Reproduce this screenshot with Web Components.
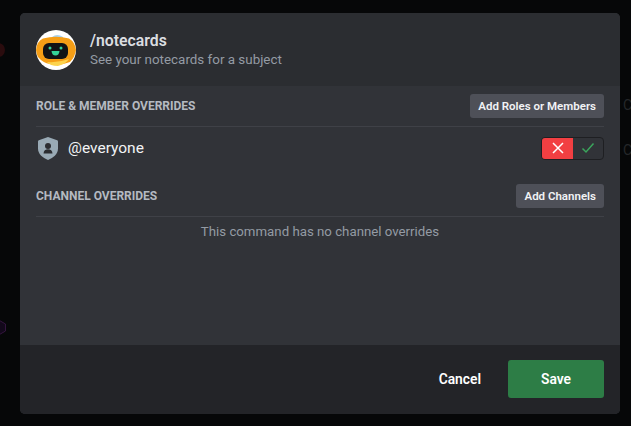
<!DOCTYPE html>
<html>
<head>
<meta charset="utf-8">
<style>
  html, body { margin: 0; height: 100%; }
  body {
    width: 631px;
    height: 426px;
    overflow: hidden;
    background: #060708;
    font-family: Roboto, "Noto Sans", sans-serif;
  }
</style>
</head>
<body>
<perm-backdrop>
  <perm-modal>
    <cmd-header slot="header" name="/notecards" desc="See your notecards for a subject"></cmd-header>
    <section-head title="Role &amp; Member Overrides" action="Add Roles or Members"></section-head>
    <everyone-row></everyone-row>
    <section-head title="Channel Overrides" action="Add Channels"></section-head>
    <p style="margin:6px 0 0;text-align:center;font-size:13.25px;line-height:18px;color:#949ba4">This command has no channel overrides</p>
    <modal-footer slot="footer"></modal-footer>
  </perm-modal>
</perm-backdrop>

<script>
// Dimmed page behind the dialog
class PermBackdrop extends HTMLElement {
  constructor() {
    super();
    this.attachShadow({ mode: "open" });
    this.shadowRoot.innerHTML = `
      <style>
        :host { display: flex; position: relative; width: 631px; height: 426px; box-sizing: border-box; padding: 13px 11px 12px 20px; }
        .dot { position: absolute; left: -8px; top: 43px; width: 13px; height: 14px; border-radius: 50%; background: #2a0c0e; }
        .hex { position: absolute; left: -7px; top: 320px; }
        .c { position: absolute; left: 623px; font: 14px Roboto, sans-serif; color: #25272a; }
      </style>
      <div class="dot"></div>
      <svg class="hex" width="13" height="15" viewBox="0 0 13 15"><path d="M6.500 .5 12.500 4V11L6.500 14.500 .5 11V4Z" fill="#12081a" stroke="#34153f"/></svg>
      <div class="c" style="top:97px">C</div>
      <div class="c" style="top:142px">C</div>
      <slot></slot>`;
  }
}

class PermModal extends HTMLElement {
  constructor() {
    super();
    this.attachShadow({ mode: "open" });
    this.shadowRoot.innerHTML = `
      <style>
        :host { display: flex; flex-direction: column; width: 600px; height: 401px; border-radius: 5px; overflow: hidden; background: #313338; position: relative; z-index: 1; }
        .body { flex: 1; padding: 8px 16px 0; min-height: 0; }
      </style>
      <slot name="header"></slot>
      <div class="body"><slot></slot></div>
      <slot name="footer"></slot>`;
  }
}

class CmdHeader extends HTMLElement {
  constructor() {
    super();
    this.attachShadow({ mode: "open" });
    this.shadowRoot.innerHTML = `
      <style>
        :host { display: flex; align-items: center; gap: 14px; height: 73px; box-sizing: border-box; padding: 1px 16px 0; background: #2b2d31; }
        svg { flex: none; display: block; }
        .name { font-size: 15.8px; line-height: 20px; font-weight: 600; color: #dbdee1; }
        .desc { font-size: 13.4px; line-height: 18px; color: #949ba4; }
      </style>
      <svg width="40" height="40" viewBox="0 0 40 40">
        <circle cx="20" cy="20" r="20" fill="#fff"/>
        <path d="M16 7 Q21 3 27 7 L27 9 H16Z" fill="#a9d2ee"/>
        <path d="M0 20 Q1 11 7 8.500 Q20 5 33 8.500 Q39 12 40 20 Q39 27 34 32 Q24 36 14 34 Q7 33 2 27 Q.5 24 0 20Z" fill="#f59e16"/>
        <path d="M11 32 Q22 33 33 29 Q30 34 22 36 Q14 36 11 32Z" fill="#fcd34d"/>
        <rect x="7" y="13" width="25" height="16" rx="6" fill="#111316"/>
        <circle cx="14" cy="18" r="1.500" fill="#34d399"/>
        <circle cx="25" cy="18" r="1.500" fill="#34d399"/>
        <path d="M15.500 21 H23.500 Q23 25.500 19.500 25.500 Q16 25.500 15.500 21Z" fill="#34d399"/>
      </svg>
      <div>
        <div class="name">${this.getAttribute("name")}</div>
        <div class="desc">${this.getAttribute("desc")}</div>
      </div>`;
  }
}

class SectionHead extends HTMLElement {
  constructor() {
    super();
    this.attachShadow({ mode: "open" });
    this.shadowRoot.innerHTML = `
      <style>
        :host { display: flex; align-items: flex-start; justify-content: space-between; height: 32px; box-sizing: content-box; border-bottom: 1px solid #3f4147; }
        .t { font-size: 12px; line-height: 24px; font-weight: 700; text-transform: uppercase; color: #b5bac1; }
        button { all: unset; height: 24px; padding: 0 8px; border-radius: 3px; background: #4e5058; color: #f2f3f5; font-size: 11.5px; line-height: 24px; font-weight: 600; }
      </style>
      <span class="t">${this.getAttribute("title")}</span>
      <button>${this.getAttribute("action")}</button>`;
  }
}

class EveryoneRow extends HTMLElement {
  constructor() {
    super();
    this.attachShadow({ mode: "open" });
    this.shadowRoot.innerHTML = `
      <style>
        :host { display: flex; align-items: center; height: 42px; margin-bottom: 15px; color: #f2f3f5; font-size: 15.500px; }
        .shield { display: block; margin-right: 10px; }
        .name { flex: 1; margin-top: -1px; }
        .toggle { display: flex; width: 63px; height: 23px; box-sizing: border-box; border: 1px solid #1e1f22; border-radius: 4px; overflow: hidden; background: #313338; }
        .toggle div { flex: 1; display: flex; align-items: center; justify-content: center; }
        .toggle .deny { background: #f23f42; flex: 0 0 31px; }
      </style>
      <svg class="shield" width="22" height="24" viewBox="0 0 22 24">
        <path d="M12 1 21.200 4.300Q22 4.600 22 5.500V12.500C22 18 17.500 21.500 12 24C6.500 21.500 2 18 2 12.500V5.500Q2 4.600 2.800 4.300Z" fill="#99aab5"/>
        <circle cx="12" cy="10" r="3" fill="#2b2d31"/>
        <path d="M7.500 17.500c0-2.800 2-4.300 4.500-4.300s4.500 1.500 4.500 4.300Z" fill="#2b2d31"/>
      </svg>
      <span class="name">@everyone</span>
      <div class="toggle">
        <div class="deny">
          <svg width="12" height="12" viewBox="0 0 12 12"><path d="M1 1 11 11M11 1 1 11" stroke="#fff" stroke-width="1.500" fill="none"/></svg>
        </div>
        <div>
          <svg width="14" height="12" viewBox="0 0 14 12"><path d="M1.500 6.500 5 10 12.500 1.500" stroke="#3ba55c" stroke-width="1.500" fill="none"/></svg>
        </div>
      </div>`;
  }
}

class ModalFooter extends HTMLElement {
  constructor() {
    super();
    this.attachShadow({ mode: "open" });
    this.shadowRoot.innerHTML = `
      <style>
        :host { display: flex; align-items: flex-start; justify-content: flex-end; height: 69px; box-sizing: border-box; padding: 15px 16px 0; background: #232428; font-size: 13.8px; font-weight: 600; color: #fff; }
        .cancel { margin-right: 27px; line-height: 38px; }
        .save { display: flex; align-items: center; justify-content: center; width: 96px; height: 38px; border-radius: 3px; background: #2d7d46; }
      </style>
      <span class="cancel">Cancel</span>
      <span class="save">Save</span>`;
  }
}

customElements.define("perm-backdrop", PermBackdrop);
customElements.define("perm-modal", PermModal);
customElements.define("cmd-header", CmdHeader);
customElements.define("section-head", SectionHead);
customElements.define("everyone-row", EveryoneRow);
customElements.define("modal-footer", ModalFooter);
</script>
</body>
</html>
